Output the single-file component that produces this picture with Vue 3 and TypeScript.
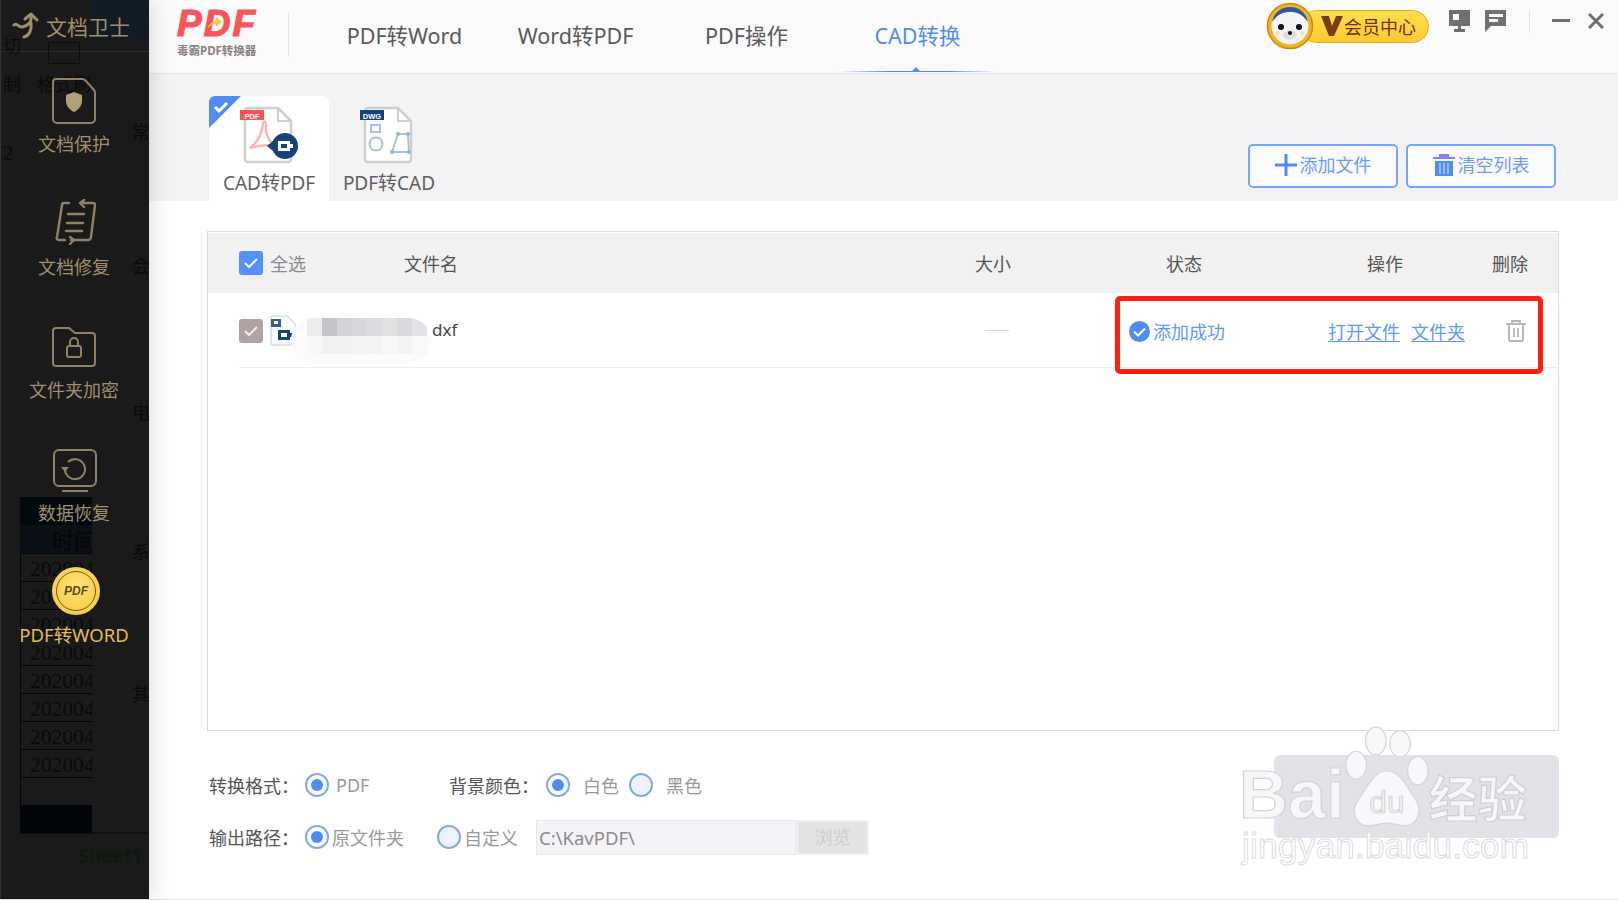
<script setup lang="ts">
const tabs = ['PDF转Word', 'Word转PDF', 'PDF操作', 'CAD转换']
const ghostYears = Array.from({ length: 8 }, () => '202004')
const ghostSide = [
  { t: '常', y: 118 },
  { t: '会', y: 252 },
  { t: '电', y: 398 },
  { t: '系', y: 538 },
  { t: '其', y: 680 },
]
const mosaicTop = ['#ecebee', '#c5c4c9', '#d2d2d7', '#d8d8dc', '#dcdce0', '#e3e0e2', '#d9dae0', '#e4e4e8']
const mosaicBottom = ['#f8f8f9', '#f1f1f3', '#f1f1f2', '#f4f4f5', '#f3f3f5', '#f7f7f8', '#f3f3f5', '#f9f9fa']
</script>

<template>
  <div class="app">
    <aside class="side">
      <div class="ghost" aria-hidden="true">
        <div class="g-navy"></div>
        <div class="g-line"></div>
        <div class="g-line2"></div>
        <div class="g-stamp"></div>
        <span class="g-t g-cut">切</span>
        <span class="g-t g-copy">制</span>
        <span class="g-t g-brush">格式刷</span>
        <span class="g-t g-two">2</span>
        <div v-for="g in ghostSide" :key="g.t" class="g-t g-side" :style="{ top: g.y + 'px' }">{{ g.t }}</div>
        <div class="g-table">
          <div class="g-head"></div>
          <div class="g-time">时间</div>
          <div v-for="(y, i) in ghostYears" :key="i" class="g-row">{{ y }}</div>
          <div class="g-row"></div>
          <div class="g-foot"></div>
        </div>
        <span class="g-sheet">Sheet1</span>
      </div>

      <div class="brand">
        <svg class="brand-ic" width="30" height="30" viewBox="0 0 30 30" fill="none" stroke="#a08e6c" stroke-width="3" stroke-linecap="round" stroke-linejoin="round">
          <path d="M3 14c3-3 5 3 8 2 5-1 10-4 9-11" />
          <path d="M14 8l6-5 6 6" />
          <path d="M20 12c1 7-2 13-7 14" />
        </svg>
        <span>文档卫士</span>
      </div>

      <nav class="nav">
        <div class="nav-item">
          <svg width="44" height="46" viewBox="0 0 44 46" fill="none" stroke="#8f8068" stroke-width="2">
            <path d="M4 1h26c2 0 3 1 4 2l8 9c1 1 1 2 1 3v26a4 4 0 0 1-4 4H5a4 4 0 0 1-4-4V4a3 3 0 0 1 3-3z" />
            <path d="M22 14l8 3v6c0 5-4 9-8 11-4-2-8-6-8-11v-6z" fill="#b3a078" stroke="none" />
          </svg>
          <span>文档保护</span>
        </div>
        <div class="nav-item nav-2">
          <svg width="44" height="46" viewBox="0 0 44 46" fill="none" stroke="#8f8068" stroke-width="2.4" stroke-linecap="round" stroke-linejoin="round">
            <path d="M14 4H9a2 2 0 0 0-2 2L2 38a2 2 0 0 0 2 3h6" />
            <path d="M28 4h10a2 2 0 0 1 2 2l-4 32a3 3 0 0 1-3 3H16" />
            <path d="M29 1l-4 3 4 4M15 38l4 3-4 4" />
            <path d="M13 15h16M12 24h16M11 32h16" />
          </svg>
          <span>文档修复</span>
        </div>
        <div class="nav-item nav-3">
          <svg width="44" height="40" viewBox="0 0 44 40" fill="none" stroke="#8f8068" stroke-width="2">
            <path d="M1 4a3 3 0 0 1 3-3h13l6 5h17a3 3 0 0 1 3 3v27a3 3 0 0 1-3 3H4a3 3 0 0 1-3-3z" />
            <rect x="15" y="19" width="14" height="11" rx="2" />
            <path d="M18 19v-4a4 4 0 0 1 8 0v4" />
          </svg>
          <span>文件夹加密</span>
        </div>
        <div class="nav-item nav-4">
          <svg width="44" height="44" viewBox="0 0 44 44" fill="none" stroke="#8f8068" stroke-width="2">
            <rect x="1" y="1" width="42" height="36" rx="5" />
            <path d="M9 42h26" />
            <path d="M15 13a10 10 0 1 1-3 7" />
            <path d="M8 18h8l-4 5z" fill="#8f8068" stroke="none" />
          </svg>
          <span>数据恢复</span>
        </div>
        <div class="nav-item nav-5">
          <div class="pdf-badge">
            <div class="pdf-ring">PDF</div>
          </div>
          <span>PDF转WORD</span>
        </div>
      </nav>
    </aside>

    <main class="main">
      <header class="top">
        <div class="logo">
          <div class="logo-mark">
            PDF
            <svg class="logo-arrow" width="16" height="14" viewBox="0 0 16 14"><path d="M1 13c1-5 4-8 8-8V1l6 5-6 5V8c-3 0-6 1-8 5z" fill="#ffc93c" /></svg>
          </div>
          <div class="logo-sub">毒霸PDF转换器</div>
        </div>
        <div class="top-div"></div>
        <div class="tabs">
          <div v-for="(t, i) in tabs" :key="t" class="tab" :class="{ active: i === 3 }">{{ t }}</div>
        </div>
        <div class="vip">
          <div class="avatar">
            <svg width="48" height="48" viewBox="0 0 48 48">
              <circle cx="24" cy="24" r="22.5" fill="#f3b21e" stroke="#c98a12" stroke-width="1.5" />
              <circle cx="24" cy="24" r="18.5" fill="#f3f3f8" />
              <path d="M6 20C8 9 17 5 24 5s16 4 18 15C36 12 31 10 24 10s-12 2-18 10z" fill="#2f5a9c" />
              <circle cx="15" cy="25" r="3" fill="#111" />
              <circle cx="33" cy="25" r="3" fill="#111" />
              <ellipse cx="24" cy="33" rx="7" ry="4.5" fill="#dfdfe3" />
              <circle cx="24" cy="31" r="2" fill="#111" />
              <circle cx="12" cy="31" r="2" fill="#ffd0d0" />
              <circle cx="36" cy="31" r="2" fill="#ffd0d0" />
            </svg>
          </div>
          <div class="pill">
            <svg width="22" height="20" viewBox="0 0 22 20"><path d="M0 0h8l3 10 4-10h7l-9 20H8z" fill="#7a3d12" /></svg>
            <span>会员中心</span>
          </div>
        </div>
        <div class="win">
          <svg width="23" height="23" viewBox="0 0 23 23" fill="#707070">
            <path d="M1 0h21v16H13v3h4v3H6v-3h4v-3H1z" />
            <rect x="5" y="4" width="6" height="6" fill="#fbfbfb" />
          </svg>
          <svg width="23" height="23" viewBox="0 0 23 23" fill="#707070">
            <path d="M1 0h21v16H7l-6 6z" />
            <rect x="5" y="4" width="14" height="3" fill="#fbfbfb" />
            <rect x="5" y="9" width="9" height="3" fill="#fbfbfb" />
          </svg>
          <div class="win-div"></div>
          <div class="win-min"></div>
          <svg width="16" height="16" viewBox="0 0 16 16" stroke="#707070" stroke-width="3"><path d="M1 1l14 14M15 1L1 15" /></svg>
        </div>
      </header>

      <section class="bar">
        <div class="modes">
          <div class="mode on">
            <div class="corner"></div>
            <svg class="corner-check" width="16" height="12" viewBox="0 0 16 12" fill="none" stroke="#fff" stroke-width="3"><path d="M2 6l4 4 8-8" /></svg>
            <svg width="62" height="58" viewBox="0 0 62 58" fill="none">
              <path d="M10 2h30l13 13v38a3 3 0 0 1-3 3H10a3 3 0 0 1-3-3V5a3 3 0 0 1 3-3z" fill="#fff" stroke="#cfcfcf" stroke-width="2.5" />
              <path d="M40 2v13h13" stroke="#cfcfcf" stroke-width="2" />
              <rect x="2" y="4" width="24" height="10" fill="#ff4f55" />
              <text x="14" y="12.5" class="tiny" text-anchor="middle" fill="#fff">PDF</text>
              <path d="M12 42c8-6 12-16 13-24 1-5 4-2 3 3-1 9 6 20 15 20-9-3-20-2-31 1z" stroke="#ffb4b4" stroke-width="2.4" />
              <circle cx="47" cy="40" r="13" fill="#16427a" />
              <path d="M29 40l6-5v10z" fill="#16427a" />
              <rect x="40" y="35" width="12" height="10" fill="#fff" />
              <rect x="43" y="38" width="6" height="4" fill="#16427a" />
              <rect x="52" y="38" width="3" height="4" fill="#fff" />
            </svg>
            <span>CAD转PDF</span>
          </div>
          <div class="mode">
            <svg width="62" height="58" viewBox="0 0 62 58" fill="none">
              <path d="M10 2h30l13 13v38a3 3 0 0 1-3 3H10a3 3 0 0 1-3-3V5a3 3 0 0 1 3-3z" fill="#fff" stroke="#cfcfcf" stroke-width="2.5" />
              <path d="M40 2v13h13" stroke="#cfcfcf" stroke-width="2" />
              <rect x="2" y="4" width="24" height="10" fill="#16427a" />
              <text x="14" y="12.5" class="tiny" text-anchor="middle" fill="#fff">DWG</text>
              <rect x="13" y="19" width="9" height="7" stroke="#a6c3e0" stroke-width="2" />
              <circle cx="18" cy="38" r="6.5" stroke="#a6c3e0" stroke-width="2" />
              <path d="M34 46l6-18h10l1 18z" stroke="#a6c3e0" stroke-width="2" />
              <g fill="#8fb4d8"><circle cx="34" cy="46" r="2" /><circle cx="40" cy="28" r="2" /><circle cx="50" cy="28" r="2" /><circle cx="51" cy="46" r="2" /></g>
            </svg>
            <span>PDF转CAD</span>
          </div>
        </div>
        <div class="actions">
          <button class="btn">
            <svg width="22" height="22" viewBox="0 0 22 22" fill="#4f8df5"><path d="M9.5 0h3v9.5H22v3h-9.5V22h-3v-9.5H0v-3h9.5z" /></svg>
            添加文件
          </button>
          <button class="btn">
            <svg width="22" height="22" viewBox="0 0 22 22">
              <rect x="0" y="3" width="22" height="2" fill="#8d7fe8" />
              <rect x="6" y="0" width="10" height="3" fill="#8d7fe8" />
              <rect x="2" y="7" width="18" height="15" fill="#4f8df5" />
              <path d="M7 9v11M11 9v11M15 9v11" stroke="#a9c8fb" stroke-width="1.5" />
            </svg>
            清空列表
          </button>
        </div>
      </section>

      <section class="content">
        <div class="table">
          <div class="thead">
            <div class="th-check"><span class="chk blue"><svg width="14" height="11" viewBox="0 0 14 11" fill="none" stroke="#fff" stroke-width="2"><path d="M1 5l4 4 8-8" /></svg></span><span class="sel">全选</span></div>
            <div>文件名</div>
            <div>大小</div>
            <div>状态</div>
            <div>操作</div>
            <div>删除</div>
          </div>
          <div class="row">
            <div class="r-name">
              <span class="chk gray"><svg width="14" height="11" viewBox="0 0 14 11" fill="none" stroke="#f2ecec" stroke-width="2"><path d="M1 5l4 4 8-8" /></svg></span>
              <svg class="file-ic" width="26" height="31" viewBox="0 0 26 31" fill="none">
                <path d="M3 1h14l8 8v19a2 2 0 0 1-2 2H3a2 2 0 0 1-2-2V3a2 2 0 0 1 2-2z" fill="#fff" stroke="#dcdcdc" stroke-width="1.5" />
                <rect x="1" y="4" width="10" height="8" fill="#2e6193" />
                <rect x="4" y="6" width="4" height="3" fill="#fff" />
                <rect x="8" y="15" width="12" height="10" fill="#16427a" />
                <rect x="11" y="18" width="6" height="4" fill="#fff" />
                <rect x="20" y="18" width="4" height="4" fill="#16427a" />
              </svg>
              <div class="mosaic">
                <div class="mosaic-row"><i v-for="(c, i) in mosaicTop" :key="i" :style="{ background: c }"></i></div>
                <div class="mosaic-row"><i v-for="(c, i) in mosaicBottom" :key="i" :style="{ background: c }"></i></div>
              </div>
              <span class="ext">dxf</span>
              <span class="dash"></span>
            </div>
            <div class="r-status">
              <svg width="21" height="21" viewBox="0 0 21 21"><circle cx="10.5" cy="10.5" r="10.5" fill="#4f8df5" /><path d="M5 10.5l4 4 7-7" fill="none" stroke="#fff" stroke-width="2" /></svg>
              <span>添加成功</span>
            </div>
            <div class="r-ops"><a>打开文件</a><a>文件夹</a></div>
            <svg width="20" height="22" viewBox="0 0 20 22" fill="none" stroke="#b4b4b4" stroke-width="1.8">
              <path d="M0 4h20M6 4V1h8v3M3 4v16a1 1 0 0 0 1 1h12a1 1 0 0 0 1-1V4M8 8v9M12 8v9" />
            </svg>
            <div class="redbox"></div>
          </div>
        </div>

        <div class="opts">
          <div class="opt-row">
            <span class="lbl">转换格式：</span>
            <span class="radio on"></span><span class="val v-pdf">PDF</span>
            <span class="lbl l-bg">背景颜色：</span>
            <span class="radio on"></span><span class="val v-w v-w1">白色</span>
            <span class="radio"></span><span class="val v-w">黑色</span>
          </div>
          <div class="opt-row">
            <span class="lbl">输出路径：</span>
            <span class="radio on"></span><span class="val v-src">原文件夹</span>
            <span class="radio r-cus"></span><span class="val v-cus">自定义</span>
            <div class="path">C:\KavPDF\</div>
            <div class="browse">浏览</div>
          </div>
        </div>
      </section>

      <div class="mark" aria-hidden="true">
        <div class="mark-box"></div>
        <div class="mark-main">
          <span class="m-bai">Bai</span>
          <svg class="m-paw" width="90" height="112" viewBox="0 0 92 120">
            <g fill="#f8f8fb" stroke="#d4d4d8" stroke-width="1.2">
              <ellipse cx="13" cy="42" rx="11" ry="15" />
              <ellipse cx="34" cy="16" rx="11" ry="15" />
              <ellipse cx="60" cy="19" rx="11" ry="14" />
              <ellipse cx="79" cy="48" rx="11" ry="15" />
              <path d="M46 48c14 0 22 18 30 30 9 12 3 29-11 29-8 0-12-3-19-3s-12 3-20 3C12 107 6 90 16 78c8-11 16-30 30-30z" />
            </g>
            <text x="46" y="93" class="m-du" text-anchor="middle">du</text>
          </svg>
          <span class="m-jy">经验</span>
        </div>
        <div class="m-url">jingyan.baidu.com</div>
      </div>
    </main>
  </div>
</template>

<style>
html, body { background: #fff; }
</style>

<style scoped>
.app {
  width: 1618px;
  height: 899px;
  display: flex;
  overflow: hidden;
  position: relative;
  border-bottom: 1px solid #dcdcdc;
  font-family: "Noto Sans", "Noto Sans CJK SC", sans-serif;
  background: #fff;
}
.side {
  width: 149px;
  flex: none;
  position: relative;
  z-index: 2;
  background: #1a1a1a;
  box-shadow: 2px 0 22px rgba(0, 0, 0, 0.14);
  color: #a08e6c;
  overflow: hidden;
  border-left: 1px solid #333;
  box-sizing: border-box;
}
.ghost { position: absolute; inset: 0; overflow: hidden; }
.g-navy { position: absolute; left: 91px; top: 0; width: 58px; height: 40px; background: #101b26; }
.g-line { position: absolute; left: 0; right: 0; top: 51px; height: 1px; background: #2c2c2c; }
.g-line2 { position: absolute; left: 19px; right: 0; top: 832px; height: 2px; background: #0a1016; }
.g-stamp { position: absolute; left: 47px; top: 42px; width: 30px; height: 20px; border: 1px solid #0c0c0c; border-radius: 2px; }
.g-t { position: absolute; color: #0b0b0b; font-size: 18px; font-family: "Noto Sans CJK SC", sans-serif; white-space: nowrap; }
.g-cut { left: 2px; top: 32px; }
.g-copy { left: 2px; top: 70px; }
.g-brush { left: 36px; top: 70px; }
.g-two { left: 2px; top: 142px; font-family: "Liberation Serif", serif; font-size: 20px; }
.g-side { left: 131px; width: 17px; overflow: hidden; }
.g-table { position: absolute; left: 19px; top: 497px; width: 72px; }
.g-head { height: 28px; background: #030a0e; }
.g-time { height: 28px; background: #0a1016; color: #060606; font-size: 22px; line-height: 28px; padding-left: 32px; font-family: "Noto Sans CJK SC", serif; white-space: nowrap; overflow: hidden; box-sizing: border-box; }
.g-row {
  height: 28px;
  box-sizing: border-box;
  border-top: 1px solid #050505;
  color: #0a0a0a;
  font: 21.5px/31px "Liberation Serif", serif;
  padding-left: 9px;
  overflow: hidden;
  border-left: 1px solid #050505;
}
.g-foot { height: 28px; margin-top: 0; background: #02060a; }
.g-sheet { position: absolute; left: 77px; top: 843px; font: bold 19px "Noto Sans", sans-serif; color: #0d1a0f; }

.brand {
  position: relative;
  height: 52px;
  display: flex;
  align-items: center;
  padding-left: 10px;
  gap: 5px;
  font-size: 21px;
  box-sizing: border-box;
}
.nav { position: relative; display: flex; flex-direction: column; align-items: center; }
.nav-item {
  height: 123px;
  display: flex;
  flex-direction: column;
  align-items: center;
  font-size: 18px;
  line-height: 26px;
  padding-top: 26px;
  box-sizing: border-box;
  gap: 7px;
  width: 100%;
  padding-right: 2px;
}
.nav-2 { padding-top: 24px; gap: 9px; }
.nav-2 svg { margin-left: 5px; }
.nav-3 { padding-top: 29px; gap: 10px; height: 122px; }
.nav-4 { gap: 7px; padding-top: 29px; height: 120px; }
.nav-4 svg { margin-left: 2px; }
.nav-5 { padding-top: 27px; gap: 7px; color: #e3bd53; font-size: 18.5px; }
.pdf-badge {
  width: 48px; height: 48px; border-radius: 50%;
  background: radial-gradient(circle at 50% 40%, #ffe27a, #f7c52f);
  display: flex; align-items: center; justify-content: center;
  margin-left: 4px;
}
.pdf-ring {
  width: 40px; height: 40px; border-radius: 50%;
  border: 1.5px solid #6d5a1e; box-sizing: border-box;
  display: flex; align-items: center; justify-content: center;
  font: italic bold 12px "Liberation Sans", sans-serif; color: #5d4d1a;
}

.main { flex: 1; min-width: 0; display: flex; flex-direction: column; position: relative; }
.top {
  height: 74px; flex: none; box-sizing: border-box;
  background: #fbfbfb; border-bottom: 1px solid #e3e3ec;
  display: flex; align-items: flex-start; position: relative;
}
.logo { width: 139px; padding: 8px 0 0 28px; box-sizing: border-box; flex: none; }
.logo-mark {
  font: italic 900 37px/32px "Liberation Sans", sans-serif;
  color: #f8565a; letter-spacing: 2px; -webkit-text-stroke: 1.2px #f8565a; position: relative; width: 90px;
}
.logo-arrow { position: absolute; left: 30px; top: 8px; }
.logo-sub { font-size: 11.5px; font-weight: 700; color: #8a8184; line-height: 16px; margin-top: 3px; white-space: nowrap; }
.top-div { width: 1px; height: 45px; margin-top: 12px; background: #e6e6e6; flex: none; }
.tabs { display: grid; grid-template-columns: repeat(4, 171px); margin-left: 30px; }
.tab { height: 73px; font-size: 21.5px; line-height: 72px; text-align: center; color: #5a5a5a; position: relative; }
.tab.active { color: #4f8df5; }
.tab.active::after {
  content: ""; position: absolute; left: 7px; right: 7px; bottom: 1px; height: 1.5px;
  background: linear-gradient(90deg, rgba(79,141,245,0), #4f8df5 30%, #4f8df5 70%, rgba(79,141,245,0));
}
.tab.active::before {
  content: ""; position: absolute; left: 80px; bottom: 2px;
  border: 4px solid transparent; border-bottom-color: #4f8df5; border-top: 0;
}
.vip { position: absolute; left: 1117px; top: 2px; display: flex; align-items: center; }
.avatar { position: relative; z-index: 1; height: 48px; }
.pill {
  margin-left: -14px; height: 33px; width: 129px; box-sizing: border-box;
  background: linear-gradient(180deg, #ffdf50, #ffcb2e); border: 1.5px solid #e7a92c; border-radius: 17px;
  display: flex; align-items: center; gap: 1px; padding-left: 20px;
  font-size: 18px; color: #7a2b08; white-space: nowrap;
}
.win { position: absolute; left: 1299px; top: 10px; display: flex; align-items: flex-start; }
.win > svg:nth-child(2) { margin-left: 13px; }
.win-div { width: 1px; height: 23px; background: #e2e4f0; margin-left: 22px; }
.win-min { width: 18px; height: 3px; background: #707070; margin: 9px 0 0 22px; }
.win > svg:last-child { margin: 3px 0 0 18px; }

.bar {
  height: 127px; flex: none; background: #f3f3f3;
  display: flex; justify-content: space-between; padding: 22px 60px 0 60px;
  box-sizing: border-box;
}
.modes { display: flex; }
.mode {
  width: 120px; height: 105px; position: relative;
  display: flex; flex-direction: column; align-items: center;
  padding-top: 10px; box-sizing: border-box;
  font-size: 19px; color: #5f5f5f; line-height: 26px; border-radius: 6px 6px 0 0; overflow: hidden;
}
.mode > svg:not(.corner-check) { margin-bottom: 6px; }
.mode.on { background: #fff; }
.corner { position: absolute; left: 0; top: 0; width: 32px; height: 32px; background: #4f8df5; clip-path: polygon(0 0, 100% 0, 0 100%); }
.corner-check { position: absolute; left: 4px; top: 5px; }
.tiny { font: bold 7.5px "Liberation Sans", sans-serif; }
.actions { display: flex; gap: 8px; padding-top: 48px; margin-right: 2px; height: 44px; }
.btn {
  width: 150px; height: 44px; box-sizing: border-box; border: 2px solid #7aa5fa; border-radius: 5px; background: #fbfbfe;
  color: #6a9cff; font: 18px/22px "Noto Sans", "Noto Sans CJK SC", sans-serif;
  display: flex; align-items: center; justify-content: center; gap: 3px; padding: 0 0 2px;
}

.content { flex: 1; padding: 30px 59px 0 58px; min-height: 0; }
.table { height: 500px; box-sizing: border-box; border: 1.5px solid #dcdcdc; font-size: 18px; color: #555; }
.thead {
  height: 60px; margin-top: 1px; background: #f1f1f1;
  display: grid; grid-template-columns: 165px 571px 191px 201px 125px 1fr;
  align-items: center; padding-left: 31px;
}
.th-check { display: flex; align-items: center; gap: 7px; }
.sel { color: #8a8a92; }
.chk { width: 24px; height: 24px; border-radius: 3px; display: flex; align-items: center; justify-content: center; flex: none; }
.chk.blue { background: #5590fb; }
.chk.gray { background: #b0a3a3; }
.row {
  height: 75px; position: relative; box-sizing: border-box;
  margin-left: 31px; border-bottom: 1px solid #eeeeee; padding-top: 2px;
  display: grid; grid-template-columns: 890px 199px 178px 20px; align-items: center;
}
.r-name { display: flex; align-items: center; position: relative; height: 100%; }
.file-ic { margin-left: 7px; margin-top: -1px; flex: none; }
.mosaic { width: 140px; height: 46px; margin: 19px 0 0 -5px; border-radius: 22px; overflow: hidden; background: #fbfbfc; flex: none; }
.mosaic-row { display: flex; height: 18px; padding-left: 16px; margin-top: 0; }
.mosaic-row i { width: 15px; display: block; }
.ext { color: #444; font-size: 17px; margin: -3px 0 0 1px; }
.dash { position: absolute; left: 746px; top: 35px; width: 24px; height: 1px; background: #d8d8d8; }
.r-status { display: flex; align-items: center; gap: 3px; color: #5f97ff; }
.r-ops { display: flex; gap: 11px; color: #5f97ff; }
.r-ops a { text-decoration: underline; text-underline-offset: 2px; }
.redbox {
  position: absolute; left: 876px; top: 3px; width: 428px; height: 78px; box-sizing: border-box;
  border: 5px solid #ff2010; border-radius: 5px; pointer-events: none;
}

.opts { display: flex; flex-direction: column; padding: 0 0 0 2px; margin-top: 42px; gap: 22px; }
.opt-row { display: flex; align-items: center; height: 24px; font-size: 18px; white-space: nowrap; }
.opt-row:nth-child(2) { height: 35px; }
.lbl { color: #555; width: 96px; flex: none; }
.l-bg { margin-left: 60px; width: 97px; }
.radio {
  width: 24px; height: 24px; box-sizing: border-box; border-radius: 50%; border: 2px solid #7fa9f5; background: #eef3ff; flex: none; position: relative;
}
.radio.on { background: #fff; }
.radio.on::after { content: ""; position: absolute; left: 4px; top: 4px; width: 12px; height: 12px; border-radius: 50%; background: #4d8cff; }
.val { color: #9a9a9a; }
.v-pdf { margin-left: 7px; width: 53px; }
.v-w { margin: 0 8px 0 13px; }
.v-w1 { margin-right: 10px; }
.v-src { margin-left: 3px; width: 73px; }
.r-cus { margin-left: 32px; }
.v-cus { margin-left: 3px; width: 72px; }
.path {
  width: 260px; height: 35px; margin-top: 1px; box-sizing: border-box; border: 1px solid #e6e6ee; background: #f5f3f7; color: #8c8c8c;
  font-size: 18.5px; line-height: 33px; padding-left: 2px;
}
.browse {
  width: 73px; height: 35px; margin-top: 1px; box-sizing: border-box; border: 2px solid #f0f0f0; background: #e4e4e4; color: #cfcfcf;
  text-align: center; line-height: 30px;
}

.mark { position: absolute; left: 1090px; top: 730px; width: 330px; height: 150px; pointer-events: none; }
.mark-box { position: absolute; left: 35px; top: 25px; width: 285px; height: 83px; background: #e2e2e8; border-radius: 6px; }
.mark-main { position: absolute; left: 0; top: -4px; height: 120px; display: flex; align-items: flex-end; }
.m-bai {
  font: bold 68px/72px "Liberation Sans", sans-serif; color: #f7f7fa; -webkit-text-stroke: 1.2px #d4d4d8; margin-bottom: 16px;
}
.m-paw { margin: 0 0 8px -3px; }
.m-du { font: 34px "Liberation Sans", sans-serif; fill: #f2f2f4; stroke: #c8c8cc; stroke-width: 0.8; }
.m-jy {
  font: 700 49px/60px "Noto Sans CJK SC", sans-serif; color: #f7f7fa; -webkit-text-stroke: 1.2px #cfcfd4; margin: 0 0 20px -3px;
}
.m-url {
  position: absolute; left: 3px; top: 94px;
  font: 35px/44px "Liberation Sans", sans-serif; color: #fff; -webkit-text-stroke: 1px #dcdcdf; letter-spacing: 0.3px;
}
</style>
